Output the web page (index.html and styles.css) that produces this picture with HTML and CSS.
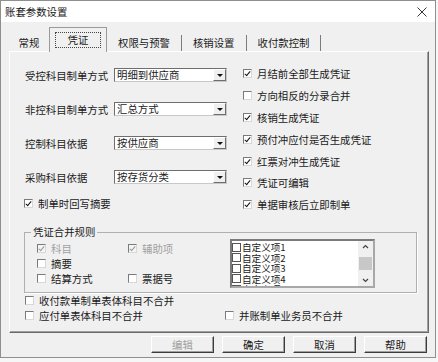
FILE: index.html
```html
<!DOCTYPE html>
<html lang="zh">
<head>
  <meta charset="UTF-8">
  <title>账套参数设置</title>
  <link rel="stylesheet" href="styles.css">
</head>
<body>
  <div class="window">
    <div class="titlebar">
      <span class="title">账套参数设置</span>
      <svg class="close" width="10" height="10" viewBox="0 0 10 10"><path d="M0.5 0.5 L9.5 9.5 M9.5 0.5 L0.5 9.5" stroke="#333" stroke-width="1"/></svg>
    </div>

    <div class="tabs">
      <div class="tab first">常规</div>
      <div class="tab active"><span class="focus">凭证</span></div>
      <div class="tab">权限与预警</div>
      <div class="tab">核销设置</div>
      <div class="tab">收付款控制</div>
    </div>

    <div class="panel">
      <div class="top">
        <div class="left">
          <div class="field">
            <span class="label">受控科目制单方式</span>
            <div class="select"><span>明细到供应商</span><span class="arrow"></span></div>
          </div>
          <div class="field">
            <span class="label">非控科目制单方式</span>
            <div class="select"><span>汇总方式</span><span class="arrow"></span></div>
          </div>
          <div class="field">
            <span class="label">控制科目依据</span>
            <div class="select"><span>按供应商</span><span class="arrow"></span></div>
          </div>
          <div class="field">
            <span class="label">采购科目依据</span>
            <div class="select"><span>按存货分类</span><span class="arrow"></span></div>
          </div>
          <div class="check write-back"><span class="box on"></span>制单时回写摘要</div>
        </div>

        <div class="right">
          <div class="check"><span class="box on"></span>月结前全部生成凭证</div>
          <div class="check"><span class="box"></span>方向相反的分录合并</div>
          <div class="check"><span class="box on"></span>核销生成凭证</div>
          <div class="check"><span class="box on"></span>预付冲应付是否生成凭证</div>
          <div class="check"><span class="box on"></span>红票对冲生成凭证</div>
          <div class="check"><span class="box on"></span>凭证可编辑</div>
          <div class="check"><span class="box on"></span>单据审核后立即制单</div>
        </div>
      </div>

      <fieldset class="group">
        <legend>凭证合并规则</legend>
        <div class="group-body">
          <div class="merge">
            <div class="check small disabled"><span class="box on"></span>科目</div>
            <div class="check small disabled"><span class="box on"></span>辅助项</div>
            <div class="check small"><span class="box"></span>摘要</div>
            <div class="check small"></div>
            <div class="check small"><span class="box"></span>结算方式</div>
            <div class="check small"><span class="box"></span>票据号</div>
          </div>
          <div class="list">
            <div class="items">
              <div class="item"><span class="sq"></span>自定义项1</div>
              <div class="item"><span class="sq"></span>自定义项2</div>
              <div class="item"><span class="sq"></span>自定义项3</div>
              <div class="item"><span class="sq"></span>自定义项4</div>
              <div class="item"><span class="sq"></span>自定义项5</div>
            </div>
            <div class="scrollbar">
              <svg class="sb-btn" width="13" height="12" viewBox="0 0 13 12"><path d="M4 7 L6.5 4.5 L9 7" fill="none" stroke="#444" stroke-width="1.2"/></svg>
              <div class="track"><div class="thumb"></div></div>
              <svg class="sb-btn" width="13" height="12" viewBox="0 0 13 12"><path d="M4 5 L6.5 7.5 L9 5" fill="none" stroke="#444" stroke-width="1.2"/></svg>
            </div>
          </div>
        </div>
      </fieldset>

      <div class="bottom-checks">
        <div class="check small"><span class="box"></span>收付款单制单表体科目不合并</div>
        <div class="row">
          <div class="check small wide"><span class="box"></span>应付单表体科目不合并</div>
          <div class="check small"><span class="box"></span>并账制单业务员不合并</div>
        </div>
      </div>
    </div>

    <div class="buttons">
      <div class="button disabled">编辑</div>
      <div class="button">确定</div>
      <div class="button">取消</div>
      <div class="button">帮助</div>
    </div>
  </div>
</body>
</html>
```

FILE: styles.css
```css
* {
  box-sizing: border-box;
}

html, body {
  margin: 0;
  padding: 0;
}

body {
  font-family: "Noto Sans CJK SC", "Noto Sans", sans-serif;
  font-size: 10.4px;
  color: #1a1a1a;
  background-color: #f6f6f6;
}

/* dialog frame */
.window {
  width: 436px;
  height: 358px;
  border: 1px solid #8f8f8f;
  background-color: #f0f0f0;
}

.titlebar {
  height: 21px;
  background-color: #fff;
  display: flex;
  align-items: center;
  justify-content: space-between;
  padding: 0 8px 0 4px;
}

.close {
  display: block;
}

/* tab strip */
.tabs {
  height: 29px;
  display: flex;
  align-items: flex-end;
  padding-left: 8px;
}

.tab {
  height: 16px;
  line-height: 16px;
  padding: 0 11px;
  border-right: 1px solid #7c7c7c;
  white-space: nowrap;
}

.tab.first {
  width: 40px;
  padding: 0;
  text-align: center;
  border-right: none;
}

.tab.active {
  height: 25px;
  width: 58px;
  padding: 0;
  margin-bottom: -1px;
  border: 1px solid #9a9a9a;
  border-bottom: none;
  background-color: #f0f0f0;
  display: flex;
  align-items: center;
  justify-content: center;
  position: relative;
  z-index: 1;
}

.focus {
  border: 1px dotted #444;
  padding: 0 12px;
  line-height: 14px;
}

/* tab page */
.panel {
  margin: 0 6px 0 8px;
  height: 282px;
  border-top: 1px solid #fff;
  border-left: 1px solid #fff;
  border-right: 1px solid #696969;
  border-bottom: 1px solid #696969;
  box-shadow: inset -1px -1px 0 #a0a0a0;
}

.top {
  display: flex;
  height: 164px;
}

.left {
  width: 217px;
  padding: 16px 0 0 15px;
}

.field {
  display: flex;
  align-items: center;
  height: 14px;
}

.field + .field {
  margin-top: 20px;
}

.label {
  width: 89px;
  white-space: nowrap;
}

.select {
  width: 113px;
  height: 14px;
  display: flex;
  align-items: center;
  justify-content: space-between;
  background-color: #fff;
  border: 1px solid;
  border-color: #6e6e6e #c8c8c8 #c8c8c8 #6e6e6e;
  padding-left: 2px;
  line-height: 12px;
}

.arrow {
  width: 13px;
  height: 12px;
  background-color: #f0f0f0;
  border: 1px solid;
  border-color: #fff #6e6e6e #6e6e6e #fff;
  display: flex;
  align-items: center;
  justify-content: center;
}

.arrow::after {
  content: "";
  border-left: 3px solid transparent;
  border-right: 3px solid transparent;
  border-top: 3px solid #111;
}

.right {
  margin-left: 16px;
  padding-top: 11px;
}

.check {
  display: flex;
  align-items: center;
  gap: 5px;
  height: 21.8px;
  white-space: nowrap;
}

.check.write-back {
  height: 14px;
  margin-top: 12px;
  margin-left: -1px;
}

.check.small {
  height: 15px;
}

.box {
  width: 9px;
  height: 9px;
  flex: none;
  background-color: #fff;
  border: 1px solid;
  border-color: #7a7a7a #d8d8d8 #d8d8d8 #7a7a7a;
  position: relative;
}

.box.on::after {
  content: "";
  position: absolute;
  left: 2px;
  top: 0px;
  width: 2px;
  height: 5px;
  border-right: 1.5px solid #111;
  border-bottom: 1.5px solid #111;
  transform: rotate(40deg);
}

.check.disabled {
  color: #a0a0a0;
}

.check.disabled .box {
  background-color: #f4f4f4;
}

.check.disabled .box.on::after {
  border-color: #999;
}

/* merge rules group */
.group {
  margin: 9px 11px 0 14px;
  padding: 0 0 4px 12px;
  border: 1px solid #b0b0b0;
  box-shadow: 1px 1px 0 #fff;
}

.group legend {
  margin-left: -6px;
  padding: 0 2px;
  line-height: 14px;
}

.group-body {
  display: flex;
}

.merge {
  display: grid;
  grid-template-columns: 91px 102px;
  grid-auto-rows: 15px;
  padding-top: 2px;
  align-content: start;
}

.list {
  width: 145px;
  height: 49px;
  display: flex;
  background-color: #fff;
  border: 2px solid;
  border-color: #7a7a7a #a8a8a8 #a8a8a8 #7a7a7a;
  overflow: hidden;
}

.items {
  flex: 1;
  overflow: hidden;
  padding-top: 1px;
  font-size: 9.6px;
}

.item {
  display: flex;
  align-items: center;
  height: 10.5px;
  line-height: 10.5px;
  white-space: nowrap;
}

.sq {
  width: 9px;
  height: 9px;
  flex: none;
  border: 1px solid #555;
  margin-right: 1px;
}

.scrollbar {
  width: 15px;
  display: flex;
  flex-direction: column;
  align-items: center;
  background-color: #f0f0f0;
}

.sb-btn {
  display: block;
  flex: none;
}

.track {
  flex: 1;
  width: 13px;
}

.thumb {
  margin-top: 4px;
  height: 13px;
  background-color: #c8c8c8;
}

.bottom-checks {
  padding-left: 15px;
}

.row {
  display: flex;
}

.check.wide {
  width: 200px;
}

/* dialog buttons */
.buttons {
  display: flex;
  justify-content: flex-end;
  gap: 8px;
  margin-top: 3px;
  padding-right: 8px;
}

.button {
  width: 63px;
  height: 17px;
  line-height: 15px;
  text-align: center;
  border: 1px solid;
  border-color: #fff #3c3c3c #3c3c3c #fff;
  box-shadow: inset -1px -1px 0 #a0a0a0;
}

.button.disabled {
  color: #a0a0a0;
}
```
